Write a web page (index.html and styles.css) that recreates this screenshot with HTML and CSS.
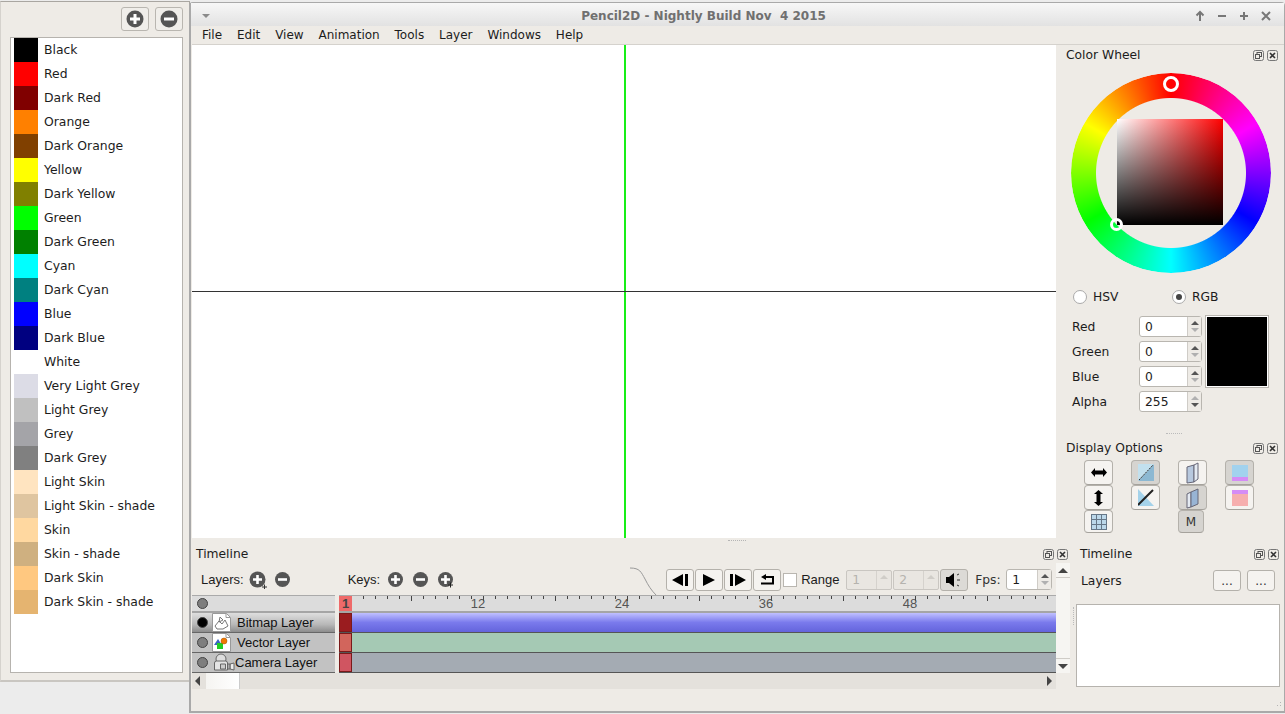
FILE: index.html
```html
<!DOCTYPE html>
<html lang="en">
<head>
  <meta charset="UTF-8" />
  <title>Pencil2D - Nightly Build Nov 4 2015</title>
  <link rel="stylesheet" href="styles.css">
</head>
<body>

<!-- palette window -->
<aside class="palette-win">
  <div class="palette-tools">
    <button class="tool-btn"><svg width="20" height="20" viewBox="0 0 20 20"><circle cx="10" cy="10" r="8.500" fill="#555"/><path d="M10 5v10M5 10h10" stroke="#fff" stroke-width="3"/></svg></button>
    <button class="tool-btn"><svg width="20" height="20" viewBox="0 0 20 20"><circle cx="10" cy="10" r="8.500" fill="#555"/><path d="M5 10h10" stroke="#fff" stroke-width="3"/></svg></button>
  </div>
  <ul class="palette-list">
    <li><i style="background:#000000"></i>Black</li>
    <li><i style="background:#ff0000"></i>Red</li>
    <li><i style="background:#800000"></i>Dark Red</li>
    <li><i style="background:#ff8000"></i>Orange</li>
    <li><i style="background:#804000"></i>Dark Orange</li>
    <li><i style="background:#ffff00"></i>Yellow</li>
    <li><i style="background:#808000"></i>Dark Yellow</li>
    <li><i style="background:#00ff00"></i>Green</li>
    <li><i style="background:#008000"></i>Dark Green</li>
    <li><i style="background:#00ffff"></i>Cyan</li>
    <li><i style="background:#008080"></i>Dark Cyan</li>
    <li><i style="background:#0000ff"></i>Blue</li>
    <li><i style="background:#000080"></i>Dark Blue</li>
    <li><i style="background:#ffffff"></i>White</li>
    <li><i style="background:#dcdce6"></i>Very Light Grey</li>
    <li><i style="background:#c0c0c0"></i>Light Grey</li>
    <li><i style="background:#a4a4a8"></i>Grey</li>
    <li><i style="background:#808080"></i>Dark Grey</li>
    <li><i style="background:#ffe4c0"></i>Light Skin</li>
    <li><i style="background:#dfc5a0"></i>Light Skin - shade</li>
    <li><i style="background:#ffd8a0"></i>Skin</li>
    <li><i style="background:#cfb080"></i>Skin - shade</li>
    <li><i style="background:#ffc880"></i>Dark Skin</li>
    <li><i style="background:#e5b470"></i>Dark Skin - shade</li>
  </ul>
</aside>

<!-- main window -->
<div class="main-win">
  <header class="titlebar">
    <svg class="win-menu" width="10" height="6" viewBox="0 0 10 6"><path d="M1 1h8L5 5z" fill="#8a8a8a"/></svg>
    <span class="win-title">Pencil2D - Nightly Build Nov &nbsp;4 2015</span>
    <div class="win-btns">
      <svg width="12" height="12" viewBox="0 0 12 12"><path d="M6 11V2M2.500 5.500L6 2l3.500 3.500" fill="none" stroke="#777" stroke-width="2"/></svg>
      <svg width="12" height="12" viewBox="0 0 12 12"><path d="M2 6h8" stroke="#777" stroke-width="2"/></svg>
      <svg width="12" height="12" viewBox="0 0 12 12"><path d="M2 6h8M6 2v8" stroke="#777" stroke-width="2"/></svg>
      <svg width="12" height="12" viewBox="0 0 12 12"><path d="M2 2l8 8M10 2l-8 8" stroke="#777" stroke-width="2"/></svg>
    </div>
  </header>
  <nav class="menubar">
    <span>File</span><span>Edit</span><span>View</span><span>Animation</span><span>Tools</span><span>Layer</span><span>Windows</span><span>Help</span>
  </nav>

  <div class="workspace">
    <main class="canvas">
      <div class="axis-v"></div>
      <div class="axis-h"></div>
    </main>

    <section class="side-dock">
      <div class="dock-head">
        <span>Color Wheel</span>
        <span class="dock-btns">
          <svg width="11" height="11" viewBox="0 0 11 11"><rect x=".5" y=".5" width="10" height="10" rx="2" fill="none" stroke="#777"/><rect x="4" y="2.500" width="4.500" height="4" fill="none" stroke="#555"/><rect x="2.500" y="4.500" width="4" height="4" fill="#eeebe6" stroke="#555"/></svg>
          <svg width="11" height="11" viewBox="0 0 11 11"><rect x=".5" y=".5" width="10" height="10" rx="2" fill="none" stroke="#777"/><path d="M3 3l5 5M8 3l-5 5" stroke="#333" stroke-width="1.600"/></svg>
        </span>
      </div>
      <div class="wheel-wrap">
        <div class="wheel"></div>
        <div class="wheel-square"></div>
        <div class="hue-handle"></div>
        <div class="sat-handle"></div>
      </div>
      <div class="radios">
        <label class="radio"><i></i>HSV</label>
        <label class="radio on"><i></i>RGB</label>
      </div>
      <div class="rgb-box">
        <div class="rgb-rows">
          <div class="rgb-row"><label>Red</label><div class="spin"><b>0</b><span class="arrows"><u></u><s></s></span></div></div>
          <div class="rgb-row"><label>Green</label><div class="spin"><b>0</b><span class="arrows"><u></u><s></s></span></div></div>
          <div class="rgb-row"><label>Blue</label><div class="spin"><b>0</b><span class="arrows"><u></u><s></s></span></div></div>
          <div class="rgb-row"><label>Alpha</label><div class="spin"><b>255</b><span class="arrows top-off"><u></u><s></s></span></div></div>
        </div>
        <div class="preview"></div>
      </div>

      <div class="grip-h"></div>
      <div class="dock-head display-head">
        <span>Display Options</span>
        <span class="dock-btns">
          <svg width="11" height="11" viewBox="0 0 11 11"><rect x=".5" y=".5" width="10" height="10" rx="2" fill="none" stroke="#777"/><rect x="4" y="2.500" width="4.500" height="4" fill="none" stroke="#555"/><rect x="2.500" y="4.500" width="4" height="4" fill="#eeebe6" stroke="#555"/></svg>
          <svg width="11" height="11" viewBox="0 0 11 11"><rect x=".5" y=".5" width="10" height="10" rx="2" fill="none" stroke="#777"/><path d="M3 3l5 5M8 3l-5 5" stroke="#333" stroke-width="1.600"/></svg>
        </span>
      </div>
      <div class="display-grid">
        <button class="opt"><svg width="16" height="9" viewBox="0 0 16 9"><path d="M0 4.500L4 0v2.500h8V0l4 4.500L12 9V6.500H4V9z"/></svg></button>
        <button class="opt on"><svg width="16" height="17" viewBox="0 0 16 17"><path d="M0 17L16 0v17z" fill="#8cb8d2"/><path d="M0 17L16 0H0z" fill="#c2e0ee"/><path d="M1 16L15 1" stroke="#333" stroke-dasharray="2 1"/></svg></button>
        <button class="opt"><svg width="13" height="22" viewBox="0 0 13 22"><path d="M1 5l7-2v17l-7 1z" fill="#b7c8de" stroke="#667"/><path d="M8 3l4-2v16l-4 3z" fill="#e4eaf2" stroke="#667"/></svg></button>
        <button class="opt on"><svg width="16" height="16" viewBox="0 0 16 16"><rect width="16" height="12" fill="#a2d2ee"/><rect y="12" width="16" height="4" fill="#d58cf5"/></svg></button>

        <button class="opt"><svg width="9" height="16" viewBox="0 0 9 16"><path d="M4.500 0L9 4H6.500v8H9l-4.500 4L0 12h2.500V4H0z"/></svg></button>
        <button class="opt"><svg width="16" height="17" viewBox="0 0 16 17"><path d="M0 0l16 17H0z" fill="#a4d2ea"/><path d="M0 16L15 1" stroke="#222" stroke-width="2"/></svg></button>
        <button class="opt on"><svg width="13" height="22" viewBox="0 0 13 22"><path d="M1 7l4-2v15l-4 1z" fill="#e4eaf2" stroke="#667"/><path d="M5 5l7-3v15l-7 3z" fill="#98b4d4" stroke="#667"/></svg></button>
        <button class="opt"><svg width="16" height="16" viewBox="0 0 16 16"><rect width="16" height="4" fill="#d58cf5"/><rect y="4" width="16" height="12" fill="#f6aeae"/></svg></button>

        <button class="opt short"><svg width="16" height="16" viewBox="0 0 16 16"><path d="M0 0h16v16H0z" fill="#bcd8ea"/><path d="M.5 0v16M5.500 0v16M10.500 0v16M15.500 0v16M0 .5h16M0 5.500h16M0 10.500h16M0 15.500h16" stroke="#667788"/></svg></button>
        <span></span>
        <button class="opt short on narrow">M</button>
        <span></span>
      </div>
    </section>

    <section class="timeline">
      <div class="grip-top"></div>
      <div class="dock-head">
        <span>Timeline</span>
        <span class="dock-btns">
          <svg width="11" height="11" viewBox="0 0 11 11"><rect x=".5" y=".5" width="10" height="10" rx="2" fill="none" stroke="#777"/><rect x="4" y="2.500" width="4.500" height="4" fill="none" stroke="#555"/><rect x="2.500" y="4.500" width="4" height="4" fill="#eeebe6" stroke="#555"/></svg>
          <svg width="11" height="11" viewBox="0 0 11 11"><rect x=".5" y=".5" width="10" height="10" rx="2" fill="none" stroke="#777"/><path d="M3 3l5 5M8 3l-5 5" stroke="#333" stroke-width="1.600"/></svg>
        </span>
      </div>
      <div class="tl-tools">
        <span class="tl-label">Layers:</span>
        <svg class="round" width="18" height="18" viewBox="0 0 18 18"><circle cx="8.500" cy="8.500" r="8" fill="#555"/><path d="M8.500 4v9M4 8.500h9" stroke="#fff" stroke-width="2.600"/><path d="M13 16h5M15.500 13.500v4.500" stroke="#333"/></svg>
        <svg class="round minus" width="17" height="17" viewBox="0 0 17 17"><circle cx="8.500" cy="8.500" r="7.500" fill="#555"/><path d="M4 8.500h9" stroke="#fff" stroke-width="2.600"/></svg>
        <span class="tl-label keys">Keys:</span>
        <svg class="round" width="17" height="17" viewBox="0 0 17 17"><circle cx="8.500" cy="8.500" r="7.500" fill="#555"/><path d="M8.500 4v9M4 8.500h9" stroke="#fff" stroke-width="2.600"/></svg>
        <svg class="round" width="17" height="17" viewBox="0 0 17 17"><circle cx="8.500" cy="8.500" r="7.500" fill="#555"/><path d="M4 8.500h9" stroke="#fff" stroke-width="2.600"/></svg>
        <svg class="round" width="17" height="17" viewBox="0 0 17 17"><circle cx="8.500" cy="8.500" r="7.500" fill="#555"/><path d="M8.500 4v9M4 8.500h9" stroke="#fff" stroke-width="2.600"/><path d="M11 14h5M13.500 11.500v5" stroke="#222"/></svg>

        <svg class="curve" width="30" height="30" viewBox="0 0 30 30"><path d="M1 1c10 0 11 4 15 11 3 6 6 11 11 16" fill="none" stroke="#999"/></svg>
        <div class="transport">
          <button class="ctl"><svg width="18" height="12" viewBox="0 0 18 12"><path d="M12 0v12L1 6zM14 0h3v12h-3z"/></svg></button>
          <button class="ctl"><svg width="14" height="14" viewBox="0 0 14 14"><path d="M1 1l12 6-12 6z"/></svg></button>
          <button class="ctl"><svg width="18" height="12" viewBox="0 0 18 12"><path d="M1 0h3v12H1zM6 0v12l11-6z"/></svg></button>
          <button class="ctl"><svg width="14" height="12" viewBox="0 0 14 12"><path d="M1 9.500h12V3H4" fill="none" stroke="#000" stroke-width="2"/><path d="M6 0v6L1 3z"/></svg></button>
        </div>
        <i class="check"></i>
        <span class="range">Range</span>
        <div class="range-spin"><b>1</b><span class="range-arrow"></span></div>
        <div class="range-spin"><b>2</b><span class="range-arrow"></span></div>
        <button class="ctl sound"><svg width="18" height="16" viewBox="0 0 18 16"><path d="M1 5h3l5-4v14l-5-4H1z"/><path d="M12 3l2-1M12 8h3M12 13l2 1" stroke="#333"/></svg></button>
        <span class="fps">Fps:</span>
        <div class="spin fps-spin"><b>1</b><span class="arrows"><u></u><s></s></span></div>
      </div>

      <div class="tracks">
        <div class="layer-col">
          <div class="layer-head"><i class="dot"></i></div>
          <div class="layer-row current"><i class="dot black"></i>
            <svg class="layer-icon" width="19" height="19" viewBox="0 0 19 19"><path d="M.5.5h14l4 4v14H.5z" fill="#fff" stroke="#999"/><path d="M14 .5v4h4" fill="none" stroke="#999"/><path d="M3 13l4-5 3 3 3-4 3 6-5 3H5z" fill="none" stroke="#777"/><path d="M8 4l3 3-4 2z" fill="none" stroke="#777"/></svg>
            <span>Bitmap Layer</span></div>
          <div class="layer-row"><i class="dot"></i>
            <svg class="layer-icon" width="19" height="19" viewBox="0 0 19 19"><path d="M.5.5h14l4 4v14H.5z" fill="#fff" stroke="#999"/><path d="M14 .5v4h4" fill="none" stroke="#999"/><path d="M6 6l4 6H2z" fill="#3a64c0"/><rect x="5" y="10" width="6" height="6" fill="#22cc22"/><circle cx="12" cy="8" r="3" fill="#f07800" stroke="#a05000" stroke-width=".5"/></svg>
            <span>Vector Layer</span></div>
          <div class="layer-row camera"><i class="dot"></i>
            <svg class="layer-icon" width="22" height="19" viewBox="0 0 22 19"><circle cx="8" cy="6" r="5" fill="#ddd" stroke="#666"/><path d="M1.500 17V10q0-2 2-2h9q2 0 2 2v7z" fill="#e4e4e4" stroke="#666"/><path d="M7.500 11h5v5h-5z" fill="#ccc" stroke="#666"/><path d="M15 11h2v5h-2zM17 11l4-1v7l-4-1z" fill="#eee" stroke="#666"/></svg>
            <span>Camera Layer</span></div>
        </div>
        <div class="track-col">
          <div class="ruler">
            <div class="cell-head">1</div>
            <div class="ticks"><span>12</span><span>24</span><span>36</span><span>48</span></div>
          </div>
          <div class="track bitmap"><div class="key"></div></div>
          <div class="track vector"><div class="key"></div></div>
          <div class="track cam"><div class="key"></div></div>
        </div>
        <div class="vscroll"><div class="vbtn"><i class="up"></i></div><div class="vscroll-fill"></div><div class="vbtn"><i class="down"></i></div></div>
        <div class="hscroll">
          <i class="left"></i><div class="thumb"></div><div class="hscroll-fill"></div><i class="right"></i>
        </div>
      </div>
    </section>

    <section class="layers-dock">
      <div class="dock-head">
        <span>Timeline</span>
        <span class="dock-btns">
          <svg width="11" height="11" viewBox="0 0 11 11"><rect x=".5" y=".5" width="10" height="10" rx="2" fill="none" stroke="#777"/><rect x="4" y="2.500" width="4.500" height="4" fill="none" stroke="#555"/><rect x="2.500" y="4.500" width="4" height="4" fill="#eeebe6" stroke="#555"/></svg>
          <svg width="11" height="11" viewBox="0 0 11 11"><rect x=".5" y=".5" width="10" height="10" rx="2" fill="none" stroke="#777"/><path d="M3 3l5 5M8 3l-5 5" stroke="#333" stroke-width="1.600"/></svg>
        </span>
      </div>
      <div class="layers-head">
        <span>Layers</span>
        <button class="dots">...</button>
        <button class="dots">...</button>
      </div>
      <div class="layers-box"></div>
    </section>
  </div>
  <div class="size-grip"></div>
</div>

</body>
</html>
```

FILE: styles.css
```css
* {
  box-sizing: border-box;
}
body {
  margin: 0;
  height: 714px;
  overflow: hidden;
  position: relative;
  background: #ececec;
  font-family: "DejaVu Sans", sans-serif;
  font-size: 12.3px;
  color: #1c1c1c;
}
button {
  font-family: inherit;
  padding: 0;
}

/* palette window */
.palette-win {
  position: absolute;
  left: 0;
  top: 1px;
  width: 190px;
  height: 681px;
  padding: 5px 6px 7px 10px;
  background: #eeebe6;
  border: 1px solid #a9a6a1;
  border-left-color: #d5d2cd;
  border-bottom: 2px solid #c9c6c1;
  display: flex;
  flex-direction: column;
}
.palette-tools {
  display: flex;
  justify-content: flex-end;
  gap: 6px;
  height: 24px;
  margin-bottom: 6px;
}
.tool-btn {
  width: 28px;
  height: 24px;
  background: #f0eeea;
  border: 1px solid #b9b6b0;
  border-radius: 3px;
  display: flex;
  align-items: center;
  justify-content: center;
}
.palette-list {
  flex: 1;
  list-style: none;
  margin: 0 0 0 -1px;
  padding: 0 0 0 3px;
  background: #fff;
  border: 1px solid #b6b3ae;
  font-size: 12.4px;
}
.palette-list li {
  height: 24px;
  line-height: 23px;
  display: flex;
  align-items: flex-start;
  gap: 6px;
}
.palette-list i {
  width: 24px;
  height: 24px;
}

/* main window */
.main-win {
  position: absolute;
  left: 189px;
  top: 2px;
  width: 1096px;
  height: 711px;
  background: #eeebe6;
  border: 2px solid #a9a9a9;
  border-top: 1px solid #a9a9a9;
  border-right-width: 1px;
  border-radius: 4px 4px 0 0;
  display: flex;
  flex-direction: column;
}
.titlebar {
  height: 23px;
  flex: none;
  background: linear-gradient(#f7f7f7, #e2e2e2);
  display: flex;
  align-items: center;
  padding: 2px 12px 0 10px;
}
.win-title {
  flex: 1;
  text-align: center;
  font-weight: bold;
  font-size: 12px;
  color: #707070;
  padding-left: 2px;
}
.win-btns {
  display: flex;
  gap: 10px;
}
.menubar {
  height: 18px;
  flex: none;
  display: flex;
  align-items: center;
  gap: 14.9px;
  padding-left: 11px;
  font-size: 12px;
}
.workspace {
  flex: 1;
  display: grid;
  grid-template-columns: 865px 1fr;
  grid-template-rows: 494px 1fr;
  min-height: 0;
}

/* canvas */
.canvas {
  position: relative;
  background: #fff;
  margin-left: 1px;
  border-top: 1px solid #d5d2cd;
}
.axis-v {
  position: absolute;
  left: 432px;
  top: 0;
  bottom: 0;
  width: 2px;
  background: #18ee18;
}
.axis-h {
  position: absolute;
  left: 0;
  right: 0;
  top: 246px;
  height: 1px;
  background: #333;
}

/* right dock */
.side-dock {
  grid-row: 1;
  grid-column: 2;
  padding: 2px 0 0 0;
  border-top: 1px solid #d5d2cd;
}
.dock-head {
  height: 16px;
  display: flex;
  justify-content: space-between;
  align-items: center;
  padding: 0 6px 0 10px;
}
.dock-btns {
  display: flex;
  gap: 3px;
}
.wheel-wrap {
  position: relative;
  width: 200px;
  height: 200px;
  margin: 10px 0 0 15px;
}
.wheel {
  width: 200px;
  height: 200px;
  border-radius: 50%;
  background: conic-gradient(#ff0000, #ff00ff, #0000ff, #00ffff, #00ff00, #ffff00, #ff0000);
  -webkit-mask: radial-gradient(circle, transparent 74.5px, #000 75.5px);
  mask: radial-gradient(circle, transparent 74.5px, #000 75.5px);
}
.wheel-square {
  position: absolute;
  left: 46px;
  top: 46px;
  width: 106px;
  height: 106px;
  background: linear-gradient(transparent, #000), linear-gradient(90deg, #fff, #ff0000);
}
.hue-handle {
  position: absolute;
  left: 92px;
  top: 3px;
  width: 16px;
  height: 16px;
  border: 3px solid #fff;
  border-radius: 50%;
}
.sat-handle {
  position: absolute;
  left: 39px;
  top: 145px;
  width: 13px;
  height: 13px;
  border: 3px solid #fff;
  border-radius: 50%;
}
.radios {
  display: flex;
  margin: 16px 0 0 17px;
  height: 16px;
}
.radio {
  width: 99px;
  display: flex;
  align-items: center;
  gap: 6px;
}
.radio i {
  width: 14px;
  height: 14px;
  background: #fff;
  border: 1px solid #aaa;
  border-radius: 50%;
  display: flex;
  align-items: center;
  justify-content: center;
}
.radio.on i::after {
  content: "";
  width: 6px;
  height: 6px;
  background: #444;
  border-radius: 50%;
}
.rgb-box {
  display: flex;
  margin: 11px 0 0 16px;
  gap: 4px;
}
.rgb-rows {
  display: flex;
  flex-direction: column;
  gap: 4px;
}
.rgb-row {
  display: flex;
  align-items: center;
  width: 130px;
  height: 21px;
}
.rgb-row label {
  width: 67px;
}
.spin {
  width: 63px;
  height: 21px;
  flex: none;
  background: #fff;
  border: 1px solid #b9b6b0;
  border-radius: 3px;
  display: flex;
  align-items: center;
}
.spin b {
  flex: 1;
  font-weight: normal;
  padding-left: 5px;
}
.arrows {
  width: 14px;
  height: 100%;
  background: #eeebe6;
  border-left: 1px solid #cfccc7;
  display: flex;
  flex-direction: column;
  align-items: center;
  justify-content: center;
  gap: 3px;
}
.arrows u {
  border: 4px solid transparent;
  border-top: 0;
  border-bottom: 4px solid #555;
}
.arrows s {
  border: 4px solid transparent;
  border-bottom: 0;
  border-top: 4px solid #b0b0b0;
}
.arrows.top-off u {
  border-bottom-color: #b0b0b0;
}
.arrows.top-off s {
  border-top-color: #555;
}
.preview {
  width: 62px;
  height: 71px;
  background: #000;
  border: 1px solid #fff;
  outline: 1px solid #b9b6b0;
}
.grip-h {
  width: 16px;
  height: 1px;
  margin: 21px 0 0 110px;
  border-top: 1px dotted #bbb;
}
.display-head {
  margin-top: 6px;
}
.display-grid {
  display: grid;
  grid-template-columns: repeat(4, 29px);
  column-gap: 18px;
  grid-template-rows: 25px 25px 23px;
  margin: 4px 0 0 28px;
}
.opt {
  width: 29px;
  height: 25px;
  background: #f5f3f0;
  border: 1px solid #b4b1ab;
  border-bottom-color: #a5a29c;
  border-radius: 4px;
  display: flex;
  align-items: center;
  justify-content: center;
  font-size: 12px;
  color: #333;
}
.opt.on {
  background: #d6d4d0;
}
.opt.short {
  height: 23px;
}
.opt.narrow {
  width: 26px;
}

/* timeline */
.timeline {
  grid-row: 2;
  grid-column: 1 / span 2;
  width: 879px;
  padding-top: 8px;
  position: relative;
}
.grip-top {
  position: absolute;
  left: 537px;
  top: 2px;
  width: 18px;
  border-top: 1px dotted #b5b5b5;
}
.timeline .dock-head {
  padding: 0 2px 0 5px;
}
.tl-tools {
  height: 28px;
  display: flex;
  align-items: center;
  margin-top: 2px;
  padding-top: 3px;
  position: relative;
}
.tl-tools > * {
  flex: none;
}
.tl-label, .range, .layer-row span, .cell-head, .ticks {
  font-family: "Liberation Sans", Arial, sans-serif;
  font-size: 13px;
}
.tl-label {
  margin-left: 10px;
  margin-right: 5px;
}
.tl-label.keys {
  margin-left: 57px;
  margin-right: 7px;
}
.round {
  margin-right: 8px;
}
.round.minus {
  margin-right: 0;
  margin-left: -1px;
}
.curve {
  position: absolute;
  left: 438px;
  top: 3px;
}
.transport {
  display: flex;
  gap: 1px;
  margin-left: 204px;
}
.ctl {
  width: 28px;
  height: 22px;
  background: #f5f3f0;
  border: 1px solid #b4b1ab;
  border-radius: 3px;
  display: flex;
  align-items: center;
  justify-content: center;
}
.check {
  width: 14px;
  height: 14px;
  background: #fff;
  border: 1px solid #b9b6b0;
  margin: 0 4px 0 2px;
}
.range {
  width: 45px;
}
.range-spin {
  width: 46px;
  height: 20px;
  background: #e9e6e1;
  border: 1px solid #c9c6c1;
  border-radius: 2px;
  display: flex;
  align-items: center;
  color: #b5b3ae;
  margin-right: 1px;
}
.range-spin b {
  flex: 1;
  font-weight: normal;
  padding-left: 5px;
}
.range-arrow {
  width: 15px;
  height: 100%;
  border-left: 1px solid #d5d2cd;
  position: relative;
}
.range-arrow::after {
  content: "";
  position: absolute;
  left: 3px;
  top: 4px;
  border: 4px solid transparent;
  border-top: 0;
  border-bottom: 4px solid #d0cdc8;
}
.ctl.sound {
  background: #dcdad6;
}
.fps {
  width: 26px;
  margin-left: 7px;
  margin-right: 5px;
  color: #333;
}
.fps-spin {
  width: 46px;
}

.tracks {
  display: grid;
  grid-template-columns: 144px 1fr 14px;
  grid-template-rows: 78px 16px;
  margin-top: 3px;
}
.layer-col {
  display: flex;
  flex-direction: column;
  margin-left: 1px;
}
.layer-head {
  height: 18px;
  background: #dcdcdc;
  border-top: 1px solid #aaa;
  border-bottom: 2px solid #a5a5a5;
  display: flex;
  align-items: center;
  padding-left: 5px;
}
.layer-row {
  height: 20px;
  background: #c2c2c2;
  border-bottom: 1px solid #666;
  display: flex;
  align-items: center;
  padding-left: 5px;
  gap: 4px;
}
.layer-row.current {
  background: linear-gradient(#dedede, #b8b8b8 60%, #8c8c8c);
}
.layer-row.camera {
  gap: 0;
}
.layer-row span {
  margin-left: 2px;
  white-space: nowrap;
  color: #111;
}
.layer-row.camera span {
  margin-left: 0;
}
.layer-row.camera .layer-icon {
  margin-left: 5px;
}
.dot {
  width: 11px;
  height: 11px;
  flex: none;
  background: #7e7e7e;
  border: 1px solid #444;
  border-radius: 50%;
}
.dot.black {
  background: #000;
}
.track-col {
  display: flex;
  flex-direction: column;
  margin-left: 4px;
}
.ruler {
  height: 18px;
  display: flex;
  background: #dcdcdc;
  border-top: 1px solid #aaa;
  border-bottom: 2px solid #a5a5a5;
}
.cell-head {
  width: 13px;
  background: #ee6a6a;
  font-weight: bold;
  color: #444;
  text-align: center;
  line-height: 16px;
}
.ticks {
  flex: 1;
  display: flex;
  padding-left: 54px;
  color: #555;
  line-height: 15px;
  background-image:
    repeating-linear-gradient(90deg, transparent 0 59px, #444 59px 60px, transparent 60px 72px),
    repeating-linear-gradient(90deg, transparent 0 11px, #444 11px 12px);
  background-size: 100% 5px, 100% 3px;
  background-repeat: no-repeat;
}
.ticks span {
  width: 144px;
  flex: none;
  text-align: center;
}
.track {
  height: 20px;
  display: flex;
  border-bottom: 1px solid #555;
}
.key {
  width: 13px;
  border: 1px solid #7a1a1a;
}
.track.bitmap {
  background: linear-gradient(#c0c0ff, #7a7aec 50%, #6464dc);
}
.track.bitmap .key {
  background: #9a1c1f;
}
.track.vector {
  background: #a5c9b4;
}
.track.vector .key {
  background: #d2655c;
}
.track.cam {
  background: #a4abb3;
}
.track.cam .key {
  background: #d05561;
}
.vscroll {
  position: relative;
  z-index: 1;
  display: flex;
  flex-direction: column;
  background: #f6f5f2;
  height: 110px;
  align-self: end;
}
.vbtn {
  height: 14px;
  flex: none;
  display: flex;
  align-items: center;
  justify-content: center;
}
.vscroll-fill {
  flex: 1;
  border-top: 1px solid #cfccc7;
  border-bottom: 1px solid #cfccc7;
}
.vscroll .up {
  border: 5px solid transparent;
  border-top: 0;
  border-bottom: 5px solid #444;
}
.vscroll .down {
  border: 5px solid transparent;
  border-bottom: 0;
  border-top: 5px solid #444;
}
.hscroll {
  grid-column: 1 / span 2;
  display: flex;
  align-items: center;
  background: #e4e1dc;
  margin-left: 1px;
  padding-left: 3px;
}
.hscroll .left {
  border: 5px solid transparent;
  border-left: 0;
  border-right: 5px solid #444;
}
.thumb {
  width: 34px;
  height: 100%;
  background: linear-gradient(90deg, #f5f4f1, #fff);
  border-right: 1px solid #ccc;
  margin-left: 6px;
}
.hscroll-fill {
  flex: 1;
}
.hscroll .right {
  border: 5px solid transparent;
  border-right: 0;
  border-left: 5px solid #444;
  margin-right: 4px;
}

/* layers dock */
.layers-dock {
  grid-row: 2;
  grid-column: 2;
  margin: 0 4px 0 20px;
  padding-top: 8px;
  height: 149px;
  position: relative;
}
.layers-dock::before {
  content: "";
  position: absolute;
  left: -3px;
  top: 69px;
  height: 18px;
  border-left: 1px dotted #bbb;
}
.layers-dock .dock-head {
  padding: 0 1px 0 4px;
}
.layers-head {
  display: flex;
  align-items: center;
  height: 24px;
  margin-top: 6px;
  padding: 1px 5px 0;
  gap: 6px;
}
.layers-head span {
  flex: 1;
}
.dots {
  width: 28px;
  height: 21px;
  background: #f5f3f0;
  border: 1px solid #b4b1ab;
  border-radius: 3px;
  font-size: 12px;
  color: #333;
}
.layers-box {
  height: 83px;
  margin-top: 12px;
  background: #fff;
  border: 1px solid #b6b3ae;
}
.size-grip {
  position: absolute;
  right: 1px;
  bottom: 3px;
  width: 10px;
  height: 10px;
  background-image: radial-gradient(#b5b5b5 40%, transparent 45%);
  background-size: 3px 3px;
  clip-path: polygon(100% 0, 100% 100%, 0 100%);
}
```
